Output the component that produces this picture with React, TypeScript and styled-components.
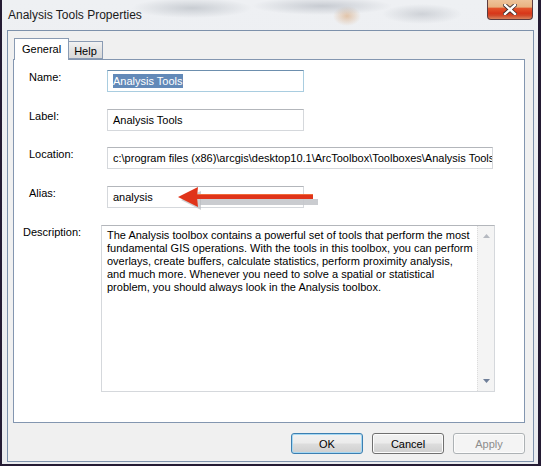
import React from "react";
import styled, { createGlobalStyle } from "styled-components";

const GlobalStyle = createGlobalStyle`
  html, body { margin: 0; padding: 0; background: #ffffff; }
  body { font-family: "Liberation Sans", Arial, sans-serif; }
  * { box-sizing: border-box; }
`;

const Window = styled.div`
  width: 541px;
  height: 466px;
  display: flex;
  flex-direction: column;
  border-left: 2px solid #241b33;
  border-right: 3px solid #241b33;
  border-bottom: 2px solid #241b33;
  padding: 0 4px 2px 5px;
  background:
    radial-gradient(ellipse 60px 10px at 190px 8px, rgba(170,176,184,0.55), transparent),
    radial-gradient(ellipse 70px 9px at 320px 6px, rgba(160,166,176,0.5), transparent),
    radial-gradient(ellipse 40px 10px at 420px 14px, rgba(175,180,188,0.5), transparent),
    radial-gradient(ellipse 14px 10px at 345px 16px, rgba(214,160,110,0.55), transparent),
    linear-gradient(#eef0f3, #e9ebee);
`;

const TitleBar = styled.div`
  height: 30px;
  flex: none;
  display: flex;
  justify-content: space-between;
  align-items: flex-start;
`;

const Title = styled.div`
  margin-top: 8px;
  padding-left: 1px;
  font-size: 12px;
  line-height: 15px;
  color: #1a1a1a;
`;

const CloseButton = styled.div`
  width: 46px;
  height: 20px;
  margin-right: 1px;
  border: 1px solid #5b3b3f;
  border-top: none;
  border-radius: 0 0 4px 4px;
  background: linear-gradient(
    #eec39a 0%,
    #e9b281 38%,
    #e4562c 42%,
    #d8361a 70%,
    #d24a2a 82%,
    #d9825c 100%
  );
  display: flex;
  align-items: center;
  justify-content: center;
`;

const Client = styled.div`
  flex: 1;
  border: 1px solid #7d91ab;
  background: #f0f0f0;
  display: flex;
  flex-direction: column;
  padding: 7px 8px 7px 5px;
`;

const TabStrip = styled.div`
  height: 21px;
  display: flex;
  align-items: flex-end;
  padding-left: 1px;
`;

const Tab = styled.div<{ $active?: boolean }>`
  position: relative;
  z-index: 1;
  height: ${(p) => (p.$active ? "22px" : "18px")};
  margin-bottom: ${(p) => (p.$active ? "-1px" : "0")};
  padding: ${(p) => (p.$active ? "3px 7px 0 7px" : "2px 5px 0 5px")};
  border: 1px solid #8a9bb3;
  border-bottom: ${(p) => (p.$active ? "none" : "1px solid #8a9bb3")};
  border-left: ${(p) => (p.$active ? "1px solid #8a9bb3" : "none")};
  background: ${(p) => (p.$active ? "#ffffff" : "linear-gradient(#f2f2f2, #e3e3e3 50%, #d9d9d9)")};
  font-size: 11px;
  line-height: 14px;
  color: #000;
`;

const Panel = styled.div`
  position: relative;
  height: 364px;
  flex: none;
  border: 1px solid #8396b0;
  background: #ffffff;
  padding: 10px 0 0 9px;
`;

const FieldGrid = styled.div`
  display: grid;
  grid-template-columns: 78px auto;
  row-gap: 16.5px;
  margin-left: 6px;
  align-items: start;
`;

const Label = styled.div`
  font-size: 11px;
  line-height: 13px;
  padding-top: 1px;
  color: #000;
`;

const Input = styled.div<{ $width: number; $focused?: boolean }>`
  width: ${(p) => p.$width}px;
  height: 22px;
  border: 1px solid ${(p) => (p.$focused ? "#a9cde0" : "#d5d8dc")};
  border-top-color: ${(p) => (p.$focused ? "#6d8fae" : "#b3b6bb")};
  padding: 0 5px;
  font-size: 11px;
  line-height: 20px;
  color: #000;
  white-space: nowrap;
  overflow: hidden;
  background: #fff;
`;

const Selected = styled.span`
  background: #6289b8;
  color: #fff;
  padding: 1px 0;
`;

const DescRow = styled.div`
  display: grid;
  grid-template-columns: 78px auto;
  margin-top: 17px;
  align-items: start;
`;

const TextArea = styled.div`
  width: 394px;
  height: 167px;
  border: 1px solid #d5d8dc;
  border-top-color: #b3b6bb;
  display: flex;
  background: #fff;
`;

const TextBody = styled.div`
  flex: 1;
  padding: 3px 0 0 5px;
  font-size: 11px;
  line-height: 13px;
  color: #000;
  white-space: pre;
  overflow: hidden;
`;

const ScrollBar = styled.div`
  width: 17px;
  flex: none;
  background: #f4f4f4;
  border-left: 1px dotted #dcdcdc;
  display: flex;
  flex-direction: column;
  justify-content: space-between;
  align-items: center;
  padding: 8px 0 8px;
`;

const ButtonRow = styled.div`
  margin-top: 10px;
  display: flex;
  justify-content: flex-end;
  gap: 9px;
`;

const Button = styled.div<{ $variant?: "default" | "normal" | "disabled" }>`
  width: 72px;
  height: 21px;
  border-radius: 3px;
  border: 1px solid
    ${(p) => (p.$variant === "default" ? "#3c7fb1" : p.$variant === "disabled" ? "#adb2b5" : "#707070")};
  background: ${(p) =>
    p.$variant === "disabled"
      ? "#f4f4f4"
      : "linear-gradient(#f2f2f2 0%, #ebebeb 48%, #dddddd 52%, #cfcfcf 100%)"};
  box-shadow: inset 0 0 0 1px ${(p) => (p.$variant === "default" ? "#a6d8f3" : "#fcfcfc")};
  display: flex;
  align-items: center;
  justify-content: center;
  font-size: 11px;
  color: ${(p) => (p.$variant === "disabled" ? "#8d8d8d" : "#000")};
`;

const ArrowOverlay = styled.svg`
  position: absolute;
  left: 164px;
  top: 126px;
  overflow: visible;
`;

const description = [
  "The Analysis toolbox contains a powerful set of tools that perform the most",
  "fundamental GIS operations. With the tools in this toolbox, you can perform",
  "overlays, create buffers, calculate statistics, perform proximity analysis,",
  "and much more. Whenever you need to solve a spatial or statistical",
  "problem, you should always look in the Analysis toolbox.",
].join("\n");

export default function App() {
  return (
    <>
      <GlobalStyle />
      <Window>
        <TitleBar>
          <Title>Analysis Tools Properties</Title>
          <CloseButton>
            <svg width="14" height="11" viewBox="0 0 14 11">
              <path d="M2 1 L12 10 M12 1 L2 10" stroke="#3b2a2a" strokeWidth="4" strokeLinecap="square" />
              <path d="M2 1 L12 10 M12 1 L2 10" stroke="#ffffff" strokeWidth="2.4" strokeLinecap="square" />
            </svg>
          </CloseButton>
        </TitleBar>
        <Client>
          <TabStrip>
            <Tab $active>General</Tab>
            <Tab>Help</Tab>
          </TabStrip>
          <Panel>
            <FieldGrid>
              <Label>Name:</Label>
              <Input $width={197} $focused>
                <Selected>Analysis Tools</Selected>
              </Input>
              <Label>Label:</Label>
              <Input $width={197}>Analysis Tools</Input>
              <Label>Location:</Label>
              <Input $width={386}>
                c:\program files (x86)\arcgis\desktop10.1\ArcToolbox\Toolboxes\Analysis Tools
              </Input>
              <Label>Alias:</Label>
              <Input $width={197}>analysis</Input>
            </FieldGrid>
            <DescRow>
              <Label>Description:</Label>
              <TextArea>
                <TextBody>{description}</TextBody>
                <ScrollBar>
                  <svg width="7" height="4" viewBox="0 0 7 4">
                    <path d="M0 4 L3.5 0 L7 4 Z" fill="#b5b9c0" />
                  </svg>
                  <svg width="7" height="4" viewBox="0 0 7 4">
                    <path d="M0 0 L3.5 4 L7 0 Z" fill="#6f7f99" />
                  </svg>
                </ScrollBar>
              </TextArea>
            </DescRow>
            <ArrowOverlay width="140" height="24" viewBox="0 0 140 24">
              <rect x="22" y="13" width="118" height="6" fill="#c4c7cb" opacity="0.9" />
              <path d="M3 14 L23 5 L23 24 Z" fill="#b9bcc1" opacity="0.7" />
              <rect x="18" y="8" width="117" height="5" fill="#e0341a" />
              <rect x="18" y="8" width="117" height="1" fill="#f06a3a" />
              <path d="M0 11 L20 1 L19 11 L20 21 Z" fill="#e0341a" />
            </ArrowOverlay>
          </Panel>
          <ButtonRow>
            <Button $variant="default">OK</Button>
            <Button>Cancel</Button>
            <Button $variant="disabled">Apply</Button>
          </ButtonRow>
        </Client>
      </Window>
    </>
  );
}
